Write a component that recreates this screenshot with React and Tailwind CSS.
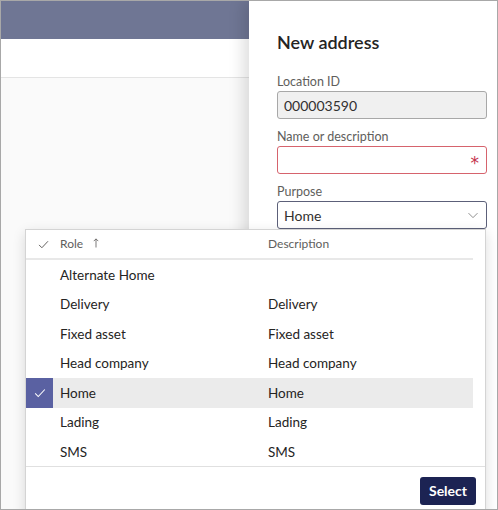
import { useState } from "react";

const rows = [
  ["Alternate Home", ""],
  ["Delivery", "Delivery"],
  ["Fixed asset", "Fixed asset"],
  ["Head company", "Head company"],
  ["Home", "Home"],
  ["Lading", "Lading"],
  ["SMS", "SMS"],
];

function Check({ className }) {
  return (
    <svg viewBox="0 0 16 16" className={className} fill="none" stroke="currentColor" strokeWidth="1.2">
      <path d="M2.5 8.5l3.5 3.5 7.5-8" />
    </svg>
  );
}

function Field({ label, children }) {
  return (
    <div className="flex flex-col">
      <span className="text-[12.5px] leading-[16px] text-[#605e5c]">{label}</span>
      <div className="mt-[1px]">{children}</div>
    </div>
  );
}

export default function App() {
  const [selected] = useState("Home");

  return (
    <div
      className="relative w-[498px] h-[510px] overflow-hidden border border-[#a8a8a8] flex bg-white"
      style={{ fontFamily: 'Lato, "Open Sans", sans-serif' }}
    >
      {/* Background page */}
      <div className="w-[248px] flex flex-col shrink-0">
        <div className="h-[38px] bg-[#6f7694]" />
        <div className="h-[39px] bg-white border-b border-[#e4e4e4]" />
        <div className="flex-1 bg-[#fafafa]" />
      </div>

      {/* Side panel */}
      <div className="flex-1 bg-white shadow-[-6px_0_14px_rgba(0,0,0,0.13)] pl-[28px] pr-[10px] pt-[28px] z-10">
        <h2 className="text-[18px] font-semibold text-[#252423] leading-[26px]">New address</h2>
        <div className="mt-[19px] flex flex-col gap-[10px]">
          <Field label="Location ID">
            <div className="h-[28px] rounded-[3px] border border-[#a8a8a8] bg-[#f0f0f0] px-[6px] flex items-center text-[14px] text-[#323130]">
              000003590
            </div>
          </Field>
          <Field label="Name or description">
            <div className="h-[28px] rounded-[3px] border border-[#d6636d] bg-white pr-[7px] flex items-center justify-end text-[#c4314b]">
              <span className="leading-none pt-[7px] text-[17px] font-['DejaVu_Sans',sans-serif]">*</span>
            </div>
          </Field>
          <Field label="Purpose">
            <div className="h-[28px] rounded-[3px] border border-[#5c6079] bg-white px-[6px] flex items-center justify-between text-[14px] text-[#323130]">
              <span>Home</span>
              <svg viewBox="0 0 16 16" className="w-[12px] h-[12px] text-[#777] mr-[1px]" fill="none" stroke="currentColor" strokeWidth="1.1">
                <path d="M2 5.5l6 6 6-6" />
              </svg>
            </div>
          </Field>
        </div>
      </div>

      {/* Lookup dropdown */}
      <div className="absolute left-[24px] top-[228px] w-[461px] h-[300px] bg-white border border-[#d4d4d4] shadow-[0_4px_12px_rgba(0,0,0,0.14)] z-20 flex flex-col">
        <div className="w-[447px] flex flex-col">
          <div className="h-[30px] flex items-center border-b-2 border-[#e8e8e8] text-[12px] text-[#605e5c]">
            <div className="w-[34px] flex justify-center">
              <Check className="w-[13px] h-[13px] text-[#605e5c]" />
            </div>
            <div className="w-[208px] flex items-center gap-[10px]">
              <span>Role</span>
              <svg viewBox="0 0 8 14" className="w-[6px] h-[12px] -mt-[3px]" fill="none" stroke="currentColor" strokeWidth="1.1">
                <path d="M4 13V1.5M1 4.5l3-3 3 3" />
              </svg>
            </div>
            <span>Description</span>
          </div>
          {rows.map(([role, desc]) => {
            const active = role === selected;
            return (
              <div
                key={role}
                className={`h-[29.5px] flex items-center text-[13.5px] text-[#252423] ${active ? "bg-[#ebebeb]" : ""}`}
              >
                <div className={`w-[27px] h-full flex items-center justify-center mr-[7px] ${active ? "bg-[#5a61a2]" : ""}`}>
                  {active && <Check className="w-[14px] h-[14px] text-white" />}
                </div>
                <span className="w-[208px]">{role}</span>
                <span>{desc}</span>
              </div>
            );
          })}
        </div>
        <div className="border-t border-[#e0e0e0] mt-[-1px] flex justify-end pr-[9px] pt-[10px]">
          <button className="w-[56px] h-[28px] rounded-[3px] bg-[#1c2353] text-white text-[14px] font-bold">
            Select
          </button>
        </div>
      </div>
    </div>
  );
}
